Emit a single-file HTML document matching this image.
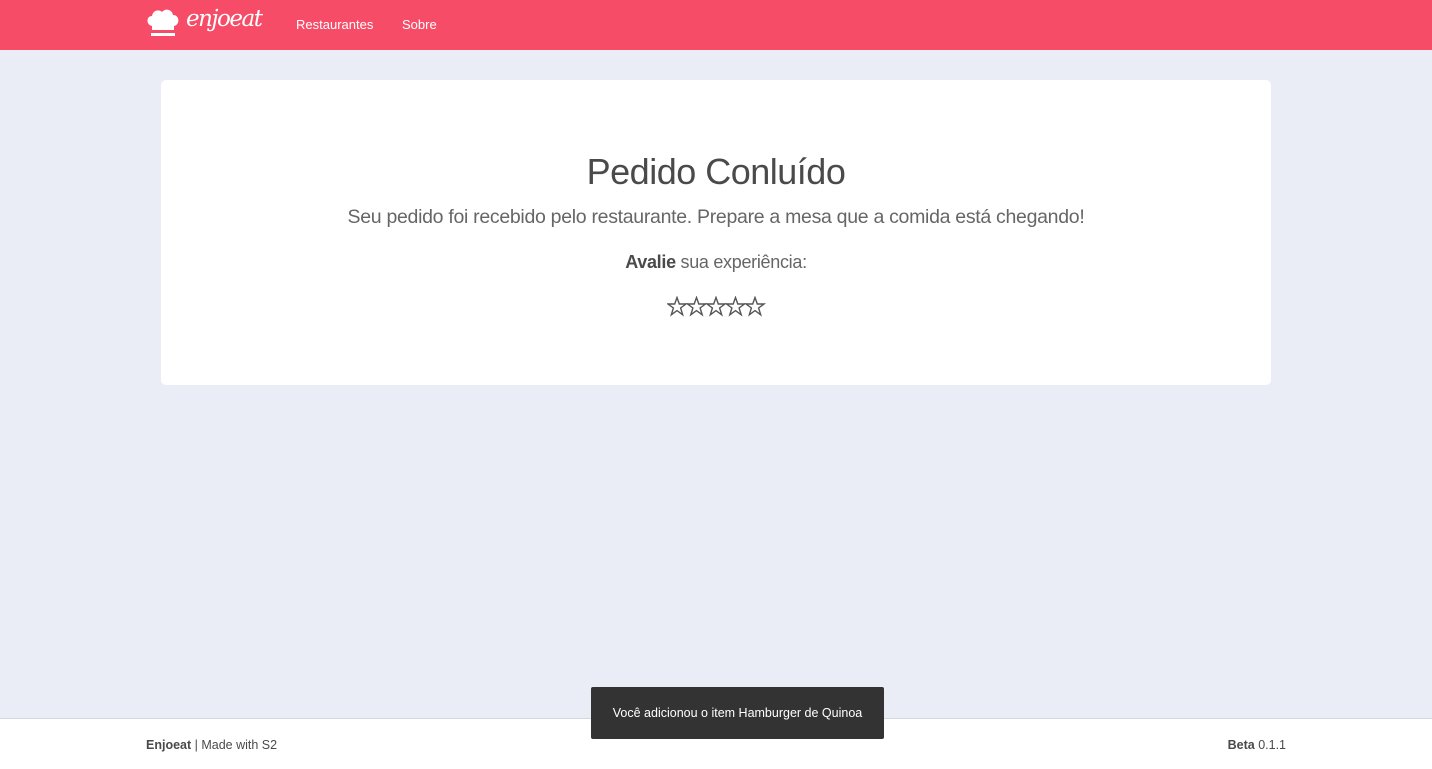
<!DOCTYPE html>
<html><head><meta charset="utf-8"><style>
*{margin:0;padding:0;box-sizing:border-box}
body{width:1432px;height:769px;background:#eaedf5;font-family:"Liberation Sans",sans-serif;color:#4a4a4a;position:relative;overflow:hidden}
.nav{position:absolute;left:0;top:0;width:1432px;height:50px;background:#f74c67;color:#fff}
.logo{position:absolute;left:146px;top:6px}
.logo .t{position:absolute;left:40px;top:0px;font-family:"DejaVu Serif",serif;font-style:italic;font-size:23px;color:#fff;letter-spacing:-1.5px;white-space:nowrap}
.nav a{position:absolute;top:17px;font-size:13px;color:#fff}
.card{position:absolute;left:161px;top:80px;width:1110px;height:305px;background:#fff;border-radius:5px;text-align:center}
h1{position:absolute;top:151px;left:0;width:1432px;text-align:center;font-weight:normal;font-size:36px;letter-spacing:-0.5px}
.sub{position:absolute;top:206px;width:1432px;text-align:center;font-size:19.5px;color:#666;letter-spacing:-0.3px}
.av{position:absolute;top:252px;width:1432px;text-align:center;font-size:18px;color:#666;letter-spacing:-0.3px}
.av b{color:#4a4a4a}
.stars{position:absolute;left:667px;top:296px}
.foot{position:absolute;left:0;top:718px;width:1432px;height:51px;background:#fff;border-top:1px solid #d4d7e0;font-size:12.5px;color:#4a4a4a}
.toast{position:absolute;left:591px;top:687px;width:293px;height:52px;background:#333;color:#fff;font-size:12.5px;line-height:52px;text-align:center;border-radius:2px}
</style></head><body>
<div class="nav">
 <div class="logo">
  <svg width="34" height="32" viewBox="0 0 34 32"><path d="M6 20 C0 19 0 10 6 10 C7 4 13 3 16 6 C19 2 26 3 27 9 C34 9 34 19 28 20 L28 24 L6 24 Z" fill="#fff"/><rect x="5" y="27" width="24" height="3" fill="#fff"/></svg>
  <span class="t">enjoeat</span>
 </div>
 <a style="left:296px">Restaurantes</a>
 <a style="left:402px">Sobre</a>
</div>
<div class="card"></div>
<h1>Pedido Conluído</h1>
<div class="sub">Seu pedido foi recebido pelo restaurante. Prepare a mesa que a comida está chegando!</div>
<div class="av"><b>Avalie</b> sua experiência:</div>
<svg class="stars" width="100" height="22" viewBox="0 0 100 22">
 <g fill="none" stroke="#555" stroke-width="1.4" stroke-linejoin="miter">
  <path id="s" d="M10 1.5 L12.3 8 L19 8 L13.6 12 L15.7 18.8 L10 14.6 L4.3 18.8 L6.4 12 L1 8 L7.7 8 Z"/>
  <use href="#s" x="19.5"/><use href="#s" x="39"/><use href="#s" x="58.5"/><use href="#s" x="78"/>
 </g>
</svg>
<div class="foot">
 <div style="position:absolute;left:146px;top:19px"><b>Enjoeat</b> | Made with S2</div>
 <div style="position:absolute;right:146px;top:19px"><b>Beta</b> 0.1.1</div>
</div>
<div class="toast">Você adicionou o item Hamburger de Quinoa</div>
</body></html>
